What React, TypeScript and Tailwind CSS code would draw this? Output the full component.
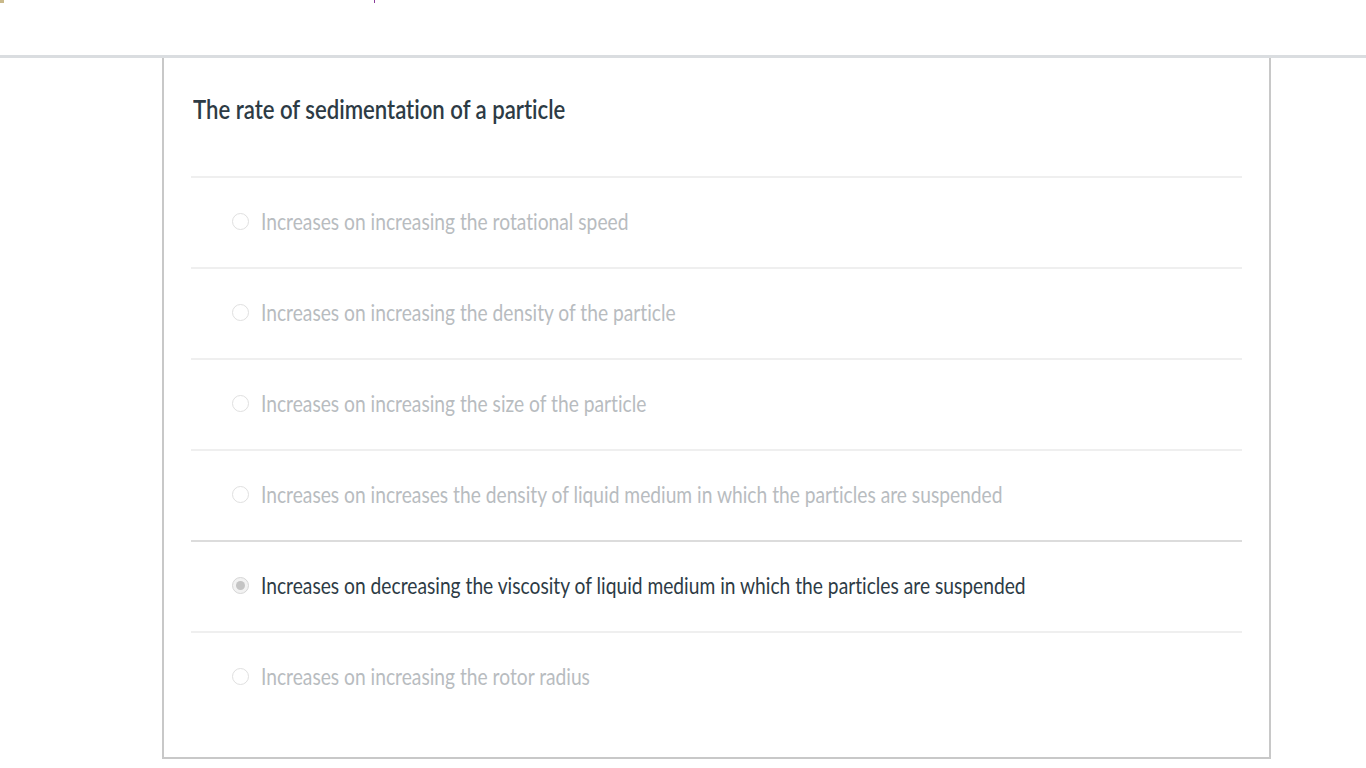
const options = [
  { text: "Increases on increasing the rotational speed", selected: false },
  { text: "Increases on increasing the density of the particle", selected: false },
  { text: "Increases on increasing the size of the particle", selected: false },
  { text: "Increases on increases the density of liquid medium in which the particles are suspended", selected: false },
  { text: "Increases on decreasing the viscosity of liquid medium in which the particles are suspended", selected: true },
  { text: "Increases on increasing the rotor radius", selected: false },
];

function Radio({ checked }: { checked: boolean }) {
  if (checked) {
    return (
      <span className="flex h-[17px] w-[17px] shrink-0 items-center justify-center rounded-full border border-[#d6d6d6] bg-[#f2f2f2]">
        <span className="h-[9px] w-[9px] rounded-full bg-[#c4c4c4]" />
      </span>
    );
  }
  return <span className="h-[17px] w-[17px] shrink-0 rounded-full border border-[#e0e0e0] bg-white" />;
}

export default function App() {
  return (
    <div className="min-h-screen bg-white" style={{ fontFamily: "Lato, 'Open Sans', sans-serif" }}>
      <div className="relative h-[55px]">
        <span className="absolute left-0 top-0 h-[3px] w-[4px] bg-[#c9b98a]" />
        <span className="absolute left-[374px] top-0 h-[3px] w-[1px] bg-[#8a3c9a]" />
      </div>
      <div className="border-t-[3px] border-[#dadde0]">
        <div className="ml-[162px] w-[1109px] border-x-2 border-b-2 border-[#c8c8c8] pb-[35px]">
          <div className="flex h-[118px] items-center pb-[16px] pl-[29px]">
            <h1 className="inline-block origin-left scale-x-[0.82] whitespace-nowrap text-[27px] font-semibold text-[#2d3b45] [font-variant-ligatures:none]">
              The rate of sedimentation of a particle
            </h1>
          </div>
          <div className="mx-[27px]">
            {options.map((o, i) => (
              <div
                key={i}
                className={`flex h-[91px] items-center gap-[12px] border-t-2 pb-[2px] pl-[41px] ${
                  i === 4 ? "border-[#dcdcdc]" : "border-[#efefef]"
                }`}
              >
                <Radio checked={o.selected} />
                <span
                  className={`inline-block origin-left scale-x-[0.835] whitespace-nowrap text-[23px] [font-variant-ligatures:none] ${
                    o.selected ? "text-[#2d3b45]" : "text-[#b8bcbf]"
                  }`}
                >
                  {o.text}
                </span>
              </div>
            ))}
          </div>
        </div>
      </div>
    </div>
  );
}
